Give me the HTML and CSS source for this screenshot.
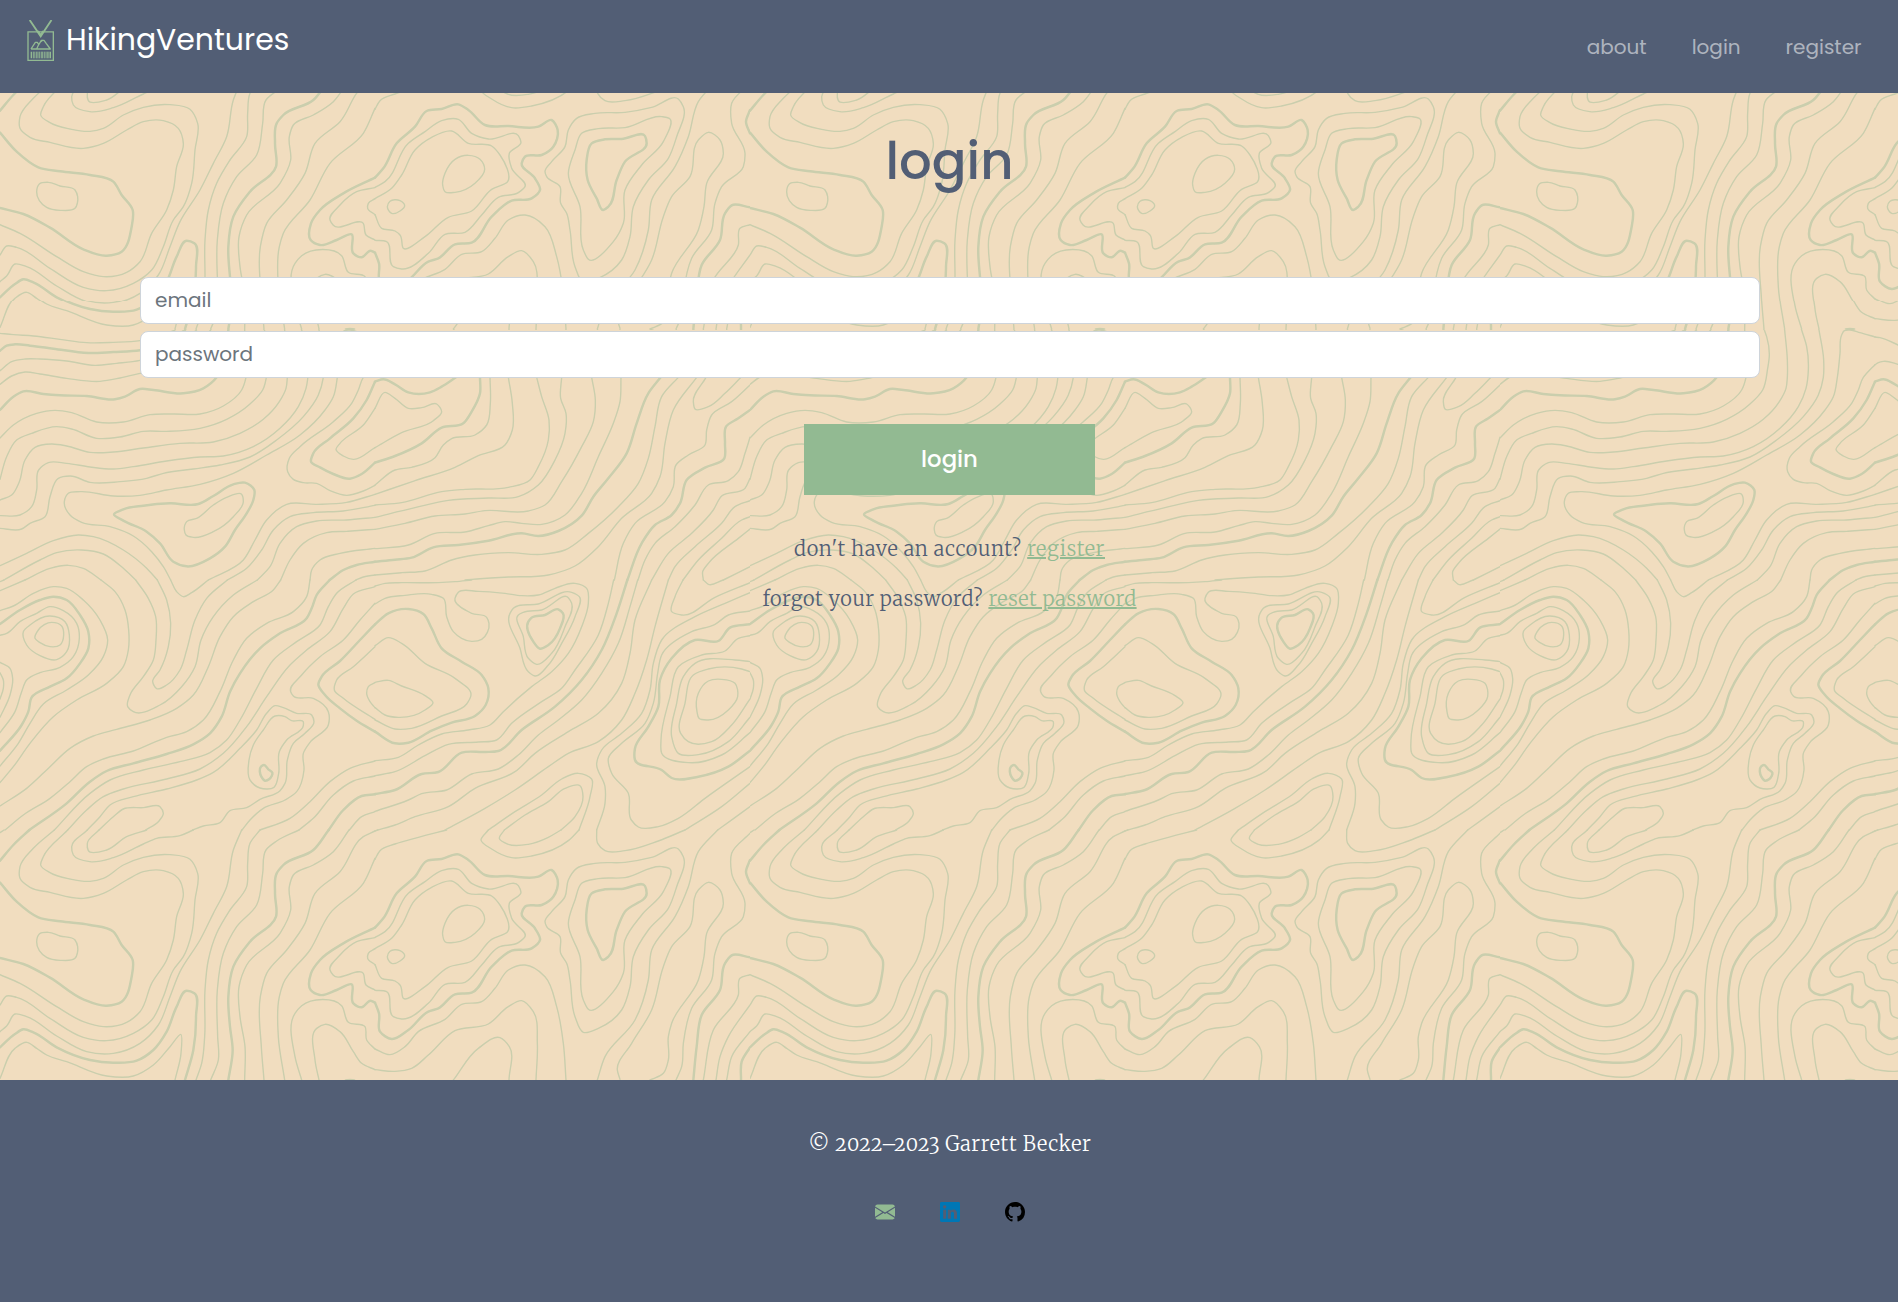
FILE: index.html
```html
<!DOCTYPE html>
<html lang="en">
<head>
<meta charset="utf-8">
<title>HikingVentures | login</title>
<link rel="stylesheet" href="styles.css">
</head>
<body>
<header class="navbar">
  <a class="brand" href="#">
    <svg class="brand-logo" viewBox="0 0 81 123" fill="none" stroke="#92ba92">
      <path stroke-width="5.500" d="M8 0 41 49 73.500 0"/>
      <path stroke-width="6" d="M33 33 41 46 49 33"/>
      <path stroke-width="4" d="M3 35.500H79V121H3Z"/>
      <path stroke-width="4" stroke-linejoin="round" d="M12 87H70L58 71 51 61H43L33 78 29 87M12 87 25 67H31L35 73M40 66 48 60"/>
      <path stroke-width="4" d="M13 95V115M70 95V115"/>
      <path stroke-width="2.800" d="M19 95V115M23.500 95V115M29 95V115M33 95V115M38 95V115M43 95V115M47 95V115M52 95V115M57 95V115M61 95V115M65.500 95V115"/>
    </svg>
    <span class="brand-name">HikingVentures</span>
  </a>
  <nav class="nav-links">
    <a href="#">about</a>
    <a href="#">login</a>
    <a href="#">register</a>
  </nav>
</header>

<main class="page">
  <svg class="topo" aria-hidden="true">
    <defs>
      <pattern id="contours" width="2250" height="2250" patternUnits="userSpaceOnUse" patternTransform="translate(0 237) scale(.333333)"></pattern>
    </defs>
    <rect width="100%" height="100%" fill="url(#contours)"/>
  </svg>
  <h1 class="title">login</h1>
  <form class="login-form">
    <input class="field" type="email" placeholder="email">
    <input class="field" type="password" placeholder="password">
    <button class="submit" type="button">login</button>
  </form>
  <p class="hint hint-register">don't have an account? <a href="#">register</a></p>
  <p class="hint hint-reset">forgot your password? <a href="#">reset password</a></p>
</main>

<footer class="footer">
  <p class="copyright">© 2022–2023 Garrett Becker</p>
  <div class="social">
    <a href="#"><svg viewBox="0 0 16 16" fill="#92ba92"><path d="M.05 3.555A2 2 0 0 1 2 2h12a2 2 0 0 1 1.950 1.555L8 8.414zM0 4.697v7.104l5.803-3.558zM6.761 8.830l-6.570 4.027A2 2 0 0 0 2 14h12a2 2 0 0 0 1.808-1.144l-6.570-4.027L8 9.586zm3.436-.586L16 11.801V4.697z"/></svg></a>
    <a href="#"><svg viewBox="0 0 16 16" fill="#0077b5"><path d="M0 1.146C0 .513.526 0 1.175 0h13.650C15.474 0 16 .513 16 1.146v13.708c0 .633-.526 1.146-1.175 1.146H1.175C.526 16 0 15.487 0 14.854zm4.943 12.248V6.169H2.542v7.225zm-1.200-8.212c.837 0 1.358-.554 1.358-1.248-.015-.709-.520-1.248-1.342-1.248S2.400 3.226 2.400 3.934c0 .694.521 1.248 1.327 1.248zm4.908 8.212V9.359c0-.216.016-.432.080-.586.173-.431.568-.878 1.232-.878.869 0 1.216.662 1.216 1.634v3.865h2.401V9.250c0-2.220-1.184-3.252-2.764-3.252-1.274 0-1.845.7-2.165 1.193v.025h-.016l.016-.025V6.169h-2.400c.03.678 0 7.225 0 7.225z"/></svg></a>
    <a href="#"><svg viewBox="0 0 16 16" fill="#000"><path d="M8 0C3.580 0 0 3.580 0 8c0 3.540 2.290 6.530 5.470 7.590.4.070.550-.170.550-.380 0-.190-.010-.820-.010-1.490-2.010.370-2.530-.490-2.690-.940-.090-.230-.480-.940-.820-1.130-.280-.150-.680-.520-.010-.530.630-.010 1.080.580 1.230.820.720 1.210 1.870.870 2.330.660.070-.520.280-.870.510-1.070-1.780-.200-3.640-.890-3.640-3.950 0-.870.310-1.590.820-2.150-.080-.200-.360-1.020.080-2.120 0 0 .670-.210 2.200.820.640-.180 1.320-.270 2-.270s1.360.090 2 .270c1.530-1.040 2.200-.820 2.200-.820.440 1.100.160 1.920.080 2.120.510.560.820 1.270.820 2.150 0 3.070-1.870 3.750-3.650 3.950.290.250.540.730.540 1.480 0 1.070-.010 1.930-.010 2.200 0 .210.150.460.550.380A8.010 8.010 0 0 0 16 8c0-4.420-3.580-8-8-8"/></svg></a>
  </div>
</footer>
<script src="topo.js"></script>
</body>
</html>
```
FILE: styles.css
```css
* { box-sizing: border-box; }
body {
  margin: 0;
  min-height: 1302px;
  display: flex;
  flex-direction: column;
  background: #f1ddbf;
  color: #525e75;
  font-family: Poppins, Inter, "Liberation Sans", sans-serif;
}
.navbar {
  height: 93px;
  flex: none;
  display: flex;
  justify-content: space-between;
  background: #525e75;
  padding: 20px 36.5px 0 27px;
}
.brand { display: flex; align-items: flex-start; color: #fff; text-decoration: none; }
.brand-logo { width: 27px; height: 41px; }
.brand-name { margin-left: 12px; font-size: 29.9px; line-height: 40px; }
.nav-links { display: flex; gap: 45px; padding-top: 12px; }
.nav-links a {
  color: rgba(255, 255, 255, .55);
  text-decoration: none;
  font-size: 20px;
  line-height: 30px;
}
.page {
  position: relative;
  height: 987px;
  flex: none;
  display: flex;
  flex-direction: column;
  align-items: center;
}
.topo { position: absolute; inset: 0; width: 100%; height: 100%; }
.page > :not(.topo) { position: relative; }
.contour { fill: none; stroke: #cacead; stroke-width: 4.2; stroke-linecap: round; stroke-linejoin: round; }
.contour.index { stroke-width: 7.4; }
.title { margin: 36px 0 0 1px; font-size: 51.3px; font-weight: 500; line-height: 64px; }
.login-form { width: 1620px; margin: 84px 0 0 2px; display: flex; flex-direction: column; align-items: center; gap: 7px; }
.field {
  width: 100%;
  height: 46.75px;
  border: 1px solid #ced4da;
  border-radius: 8px;
  padding: 0 14px;
  background: #fff;
  font: 20px Poppins, Inter, "Liberation Sans", sans-serif;
}
.field::placeholder { color: #6c757d; opacity: 1; }
.submit {
  width: 291px;
  height: 71px;
  margin: 39.5px 1px 0 0;
  padding: 0 0 1px;
  border: 0;
  background: #92ba92;
  color: #fff;
  font: 500 22.8px Poppins, Inter, "Liberation Sans", sans-serif;
}
.hint {
  margin: 0 0 0 1px;
  font: 300 20px/30px Merriweather, "DejaVu Serif Condensed", "DejaVu Serif", serif;
  white-space: nowrap;
}
.hint a { color: #92ba92; }
.hint-register { margin-top: 39px; letter-spacing: 0.65px; }
.hint-reset { margin-top: 20px; letter-spacing: 0.55px; }
.footer {
  height: 222px;
  flex: none;
  background: #525e75;
  display: flex;
  flex-direction: column;
  align-items: center;
  padding-left: 2px;
}
.copyright {
  margin: 49px 0 0;
  color: #fff;
  font: 300 20px/30px Merriweather, "DejaVu Serif Condensed", "DejaVu Serif", serif;
  font-variant-numeric: oldstyle-nums;
  letter-spacing: 0.65px;
}
.social { display: flex; gap: 45px; margin-top: 43px; }
.social svg { display: block; width: 20px; height: 20px; }
```
FILE: topo.js
```js
// Contour lines of the repeating map tile, split in six sheets.
// "i" marks an index (heavy) contour, "o" a closed one.
const sheets = [
  { x: 0, y: 0, lines: `
0,10 40,14 100,18 180,28 260,38 340,37 420,32 475,20 525,0
i 0,62 20,47 45,43 90,47 160,56 265,69 340,66 420,61 470,50 520,25 555,0
0,122 35,95 75,87 120,87 200,93 285,106 350,100 420,91 510,60 590,0
0,163 35,138 75,126 120,132 200,145 300,154 360,144 420,130 540,100 632,0
i 0,240 40,200 70,184 130,192 180,196 260,198 345,208 375,200 420,177 460,180 550,190 610,175 650,142 672,90 685,0
0,324 40,285 110,250 165,241 215,248 290,276 370,276 450,254 520,252 600,252 670,228 725,180 738,142 738,70 734,0
0,448 20,380 50,330 95,310 170,290 215,297 290,325 360,321 430,304 500,304 600,295 680,268 750,222 788,180 803,115 808,75 800,20 793,0
0,510 35,495 58,455 75,390 105,352 155,342 200,348 270,367 340,366 430,354 540,340 640,336 720,310 790,268 838,215 858,175 862,142 862,90 854,0
0,557 60,555 95,530 110,480 116,420 145,398 200,400 270,411 340,417 400,410 500,393 600,381 670,378 760,350 840,295 895,230 918,175 925,120 920,50 905,0
0,595 65,597 90,580 135,560 150,500 175,445 210,438 270,457 360,455 440,445 490,430 580,417 660,405 750,381 830,330 910,260 955,195 970,142 971,90 957,0
1125,21 1080,8 1050,0 1033,2 1025,15 1020,70 1012,142 1000,200 975,240 900,315 800,375 700,430 600,463 500,480 420,496 340,498 240,485 205,490 193,515 210,555 245,577 330,590 400,618 455,665 490,710 512,750
1125,104 1100,130 1090,142 1075,180 1055,220 1000,275 900,350 868,385 863,425 880,448 910,458 950,460 990,482 1040,496 1090,483 1125,466
i 1125,155 1100,210 1060,265 990,325 940,370 933,395 960,412 1000,432 1050,446 1085,432 1125,398
1125,235 1090,285 1020,340 1008,358 1030,378 1060,388 1125,353
io 342,553 370,538 430,527 510,520 595,522 640,498 700,463 735,458 763,480 760,510 740,550 705,600 675,650 630,685 560,709 520,695 480,640 440,605 370,572
o 553,600 560,575 590,565 640,525 680,502 725,493 730,515 700,560 640,605 580,622 558,615
625,750 730,690 765,630 800,570 860,523 950,523 1040,517 1125,493
682,750 740,715 785,660 820,600 870,560 940,548 1030,543 1125,526
772,750 810,710 840,640 890,590 950,573 1040,570 1125,562
842,750 870,690 910,640 980,608 1040,604 1125,598
930,750 935,720 960,690 1020,670 1125,655
i 989,750 1030,720 1070,705 1125,695
1068,750 1090,741 1125,735
0,707 80,670 160,632 235,615 280,620 370,660 440,715 472,750
12,750 120,690 170,668 245,660 310,672 370,715 407,750
75,750 150,715 205,706 250,715 303,750` },
  { x: 1125, y: 0, lines: `
0,21 15,23 69,45 130,75
0,104 10,98 25,94 69,103 130,125
i 0,155 25,148 60,163 100,187 165,187 200,170 243,142
i 315,142 315,190 290,245 265,280 200,293 140,340 60,378 0,398
0,235 30,187 60,205 100,235 140,233 185,222 200,245 175,272 80,308 0,353
345,142 346,220 335,285 300,315 230,326 205,345 180,383 110,412 60,420 0,465
400,142 412,220 412,300 390,345 310,377 240,412 120,452 0,493
485,142 500,200 522,270 520,330 490,410 465,450 400,472 270,478 200,485 80,518 0,525
560,142 557,205 573,250 570,310 540,390 490,465 430,500 340,504 220,511 120,533 0,562
650,142 661,210 655,275 620,350 560,455 510,525 460,543 330,542 270,552 180,558 90,580 0,598
738,142 735,215 715,280 670,380 620,490 570,555 500,583 440,580 390,575 340,587 270,606 180,610 100,645 0,656
i 857,142 820,190 785,280 755,370 700,445 655,500 620,557 550,603 490,618 440,610 340,632 250,645 175,652 110,683 60,689 0,695
910,142 860,200 840,290 820,385 790,460 730,530 640,610 570,660 500,673 400,668 300,675 230,690 150,723 80,728 0,735
965,142 895,240 870,340 855,440 830,490 740,565 670,650 600,708 520,735 400,741 290,748 270,750
993,142 955,215 960,237 1000,230 1050,190 1098,142
1125,165 1070,215 1010,255 995,300 990,345 940,375 903,405 895,470 870,515 780,580 745,640 718,750
i 1125,240 1090,265 1053,290 1050,340 1048,385 990,413 935,450 915,520 890,555 840,585 800,640 757,750
1125,322 1110,370 1090,425 1060,452 1000,465 960,525 900,590 840,640 810,690 789,750
1125,445 1110,475 1040,498 1015,540 950,610 880,670 830,750
1125,512 1080,530 1040,580 960,650 900,710 880,750
1125,560 1100,570 1040,625 970,690 924,750
1125,597 1090,625 1000,700 983,725 985,750
1125,710 1045,750` },
  { x: 0, y: 750, lines: `
0,32 75,0
0,5 12,0
303,0 345,35 375,90 386,150 385,210 370,260 320,310 230,360 160,410 90,490 40,560 0,608
0,92 40,78 100,40 160,20 200,25 250,60 300,120 323,180 310,230 265,285 200,330 130,372 90,430 55,490 0,558
i 0,132 60,90 120,60 160,50 200,60 240,105 265,155 265,205 240,250 200,295 150,320 95,352 85,395 65,435 0,512
0,166 20,160 60,125 110,100 150,80 190,92 230,130 238,175 220,230 180,262 120,278 80,300 65,335 45,395 0,458
o 70,155 90,135 150,108 195,125 208,165 200,215 170,239 120,227 80,195
o 105,175 115,150 155,127 185,138 191,165 180,195 150,200 120,188
0,247 30,265 38,295 30,345 0,412
0,278 10,300 10,325 0,357
407,0 445,55 467,110 468,180 460,240 430,290 390,345 383,380 400,395 480,375 545,320 585,260 603,180 640,110 700,45 772,0
472,0 500,60 512,130 505,200 480,270 458,305 470,326 500,315 540,270 560,210 585,120 620,55 682,0
842,0 820,30 760,65 700,110 660,170 625,260 580,345 530,385 450,420 350,448 280,468 210,505 150,560 80,625 0,678
512,0 530,35 550,50 575,38 625,0
930,0 920,50 880,95 800,130 740,175 700,240 660,335 610,420 560,455 500,472 400,513 310,537 260,560 210,605 150,655 70,705 15,750
i 989,0 950,45 935,85 920,115 840,160 780,205 720,280 690,335 665,410 630,460 580,493 500,522 400,550 320,573 270,605 200,670 88,750
1068,0 1010,40 985,80 960,135 890,185 820,240 770,325 720,420 680,480 630,518 540,545 430,570 330,600 270,640 163,750
1125,20 1060,42 1030,85 990,155 920,210 870,255 800,350 740,440 670,520 600,567 500,597 370,627 310,650 260,690 203,750
1125,70 1080,120 1030,180 960,230 905,285 872,335 880,348 940,355 985,395 985,435 930,487 910,520 912,570 890,635 855,660 790,685 750,720 726,750
i 1125,133 1080,180 1020,243 965,290 955,313 975,345 1020,385 1070,422 1125,455
1125,200 1060,260 1010,300 1003,330 1030,355 1125,418
1125,308 1105,320 1100,340 1110,365 1125,383
262,750 300,710 330,675 400,650 500,627 590,600 640,577 720,505 770,450 800,400 825,377 850,383 890,400 935,405 942,425 915,460 880,490 862,540 855,610 840,632 780,658 740,683 690,692 660,728 610,738 578,750
o 825,408 855,410 875,422 910,425 910,437 860,480 838,515 836,580 822,622 780,624 750,600 747,540 760,495 790,450
io 783,560 792,555 805,568 817,578 808,597 795,602 784,590
297,750 340,710 370,687 430,683 480,680 490,700 475,725 437,750
1125,543 1050,565 990,605 930,665 870,715 780,750
1125,588 1060,603 1000,645 940,715 897,750
i 1125,643 1085,648 1030,690 986,750
1125,695 1085,710 1048,750` },
  { x: 1125, y: 750, lines: `
0,18 30,10 80,8 190,8 240,5 290,0
0,72 30,55 90,46 170,43 205,55 215,110 235,155 290,184 320,178 342,130 335,112 290,100 240,55 250,37 310,34 390,40 440,47 490,45 540,25 600,10 635,25 640,70 620,140 580,220 530,275 470,320 385,395 345,435 280,450 200,462 130,495 70,532 0,542
i 0,133 40,100 100,87 145,102 170,145 200,205 260,245 320,285 340,325 332,375 300,408 230,428 170,452 100,488 60,490 0,455
0,197 40,173 80,190 150,250 240,295 288,345 275,372 200,408 110,445 60,447 0,420
0,307 40,301 80,318 150,347 174,368 150,390 70,412 30,405 0,383
o 405,100 415,85 490,72 590,37 613,50 600,110 560,190 520,255 480,288 460,275 435,205
o 430,105 445,97 500,90 580,53 590,70 570,140 530,220 485,253 460,235 445,170
io 460,125 470,113 510,105 550,88 564,100 555,145 520,195 495,206 475,185
716,0 700,70 670,165 600,270 560,325 500,365 410,430 365,480 310,486 220,493 150,527 60,575 0,587
i 757,0 725,100 680,210 620,300 540,380 440,450 370,513 330,516 260,518 190,576 140,582 60,630 0,642
788,0 765,80 730,190 680,280 620,360 550,420 490,465 430,525 370,567 290,582 215,630 140,641 100,660 0,694
830,0 780,120 765,220 740,310 670,400 580,455 480,520 420,575 300,625 220,680 120,710 60,735 8,750
880,0 840,140 815,240 780,340 740,420 670,485 580,520 520,560 420,630 330,685 210,750
1125,8 1020,52 920,105 890,95 900,50 924,0
985,0 1000,13 1045,0
1125,38 1050,70 960,110 860,180 835,250 825,330 800,400 740,460 680,510 665,550 690,620 690,670 665,750
1125,93 1060,105 1020,133 950,155 860,225 848,280 835,370 810,430 740,490 700,535 710,580 760,640 769,720 790,741 850,740 910,715 990,655 1125,560
i 1125,133 1065,143 1030,183 960,180 890,235 855,300 850,380 820,440 780,505 780,540 860,570 890,594 970,590 1060,560 1125,512
1125,167 1090,175 1050,213 980,225 910,260 885,350 858,480 860,520 940,548 1040,525 1125,458
1125,245 1080,240 960,250 925,290 905,370 890,470 910,520 970,524 1060,485 1125,412
1125,275 1100,267 1000,267 955,285 930,370 917,460 940,485 1010,485 1070,435 1125,357
o 966,395 970,340 1000,303 1040,298 1080,310 1088,350 1060,390 1000,420 972,415
1125,610 1040,680 930,750
1125,680 1028,750
340,750 420,695 500,645 560,597 610,580 650,597 645,650 612,750
388,750 450,705 520,665 570,625 615,617 624,650 600,710 558,750` },
  { x: 0, y: 1500, lines: `
0,8 12,0
i 0,92 40,45 88,0
163,0 100,55 60,110 60,145 90,172 150,187 250,205 310,190 380,150 430,125 490,122 535,145 550,190 530,260 520,330 500,390 455,460 420,545 380,577 310,590 250,575 170,530 60,460 0,434
203,0 130,80 122,105 150,128 210,147 270,154 310,145 370,105 430,82 510,74 570,88 593,130 585,210 575,310 550,380 520,420 490,500 455,570 400,610 320,632 250,622 150,565 50,502 20,498 0,525
262,0 215,50 220,75 270,95 340,83 430,42 470,25 540,17 580,0
297,0 262,40 265,62 320,60 380,20 440,0
725,0 700,60 680,170 640,250 600,330 540,425 510,500 475,585 420,640 340,670 260,665 170,618 80,560 45,552 20,588 0,605
i 0,158 50,215 115,262 180,274 270,285 340,305 365,345 398,390 395,440 365,515 320,527 250,508 150,443 70,402 0,384
o 110,335 118,312 145,307 180,318 225,330 233,350 225,385 180,391 140,382 118,362
i 0,652 45,612 70,598 100,607 170,652 270,690 340,698 410,692 460,660 500,605 530,530 560,482 583,490 588,560 580,660 555,750
0,745 45,655 80,637 110,655 140,675 200,695 320,738 400,738 460,705 510,650 542,613 543,670 525,750
780,0 750,40 743,100 740,170 690,240 650,310 625,390 615,480 614,620 605,700 588,750
897,0 830,33 798,60 788,130 770,225 710,290 670,370 652,480 653,620 655,690 632,750
i 986,0 940,60 850,105 830,130 825,190 828,260 750,335 700,410 685,500 690,590 698,660 685,750
1047,0 1000,65 940,105 880,135 868,170 872,240 840,310 740,405 717,470 720,560 735,650 734,750
1125,3 1090,20 1020,125 945,190 915,280 860,360 800,430 781,500 784,650 792,750
1125,85 1090,160 990,250 930,360 850,460 838,500 835,620 854,750
905,750 885,680 885,550 905,527 1025,527 1045,577 1095,590 1100,630 1125,657
957,750 945,690 950,595 975,583 1020,605 1060,665 1085,700 1125,719
1036,750 1050,748 1064,750
i 1125,293 1030,340 960,390 933,430 932,480 960,495 1010,480 1055,463 1060,520 1085,532 1112,512 1125,518
1125,323 1070,335 1020,375 990,420 1000,436 1090,430 1098,465 1125,480
1125,356 1105,370 1103,385 1125,404` },
  { x: 1125, y: 1500, lines: `
0,88 15,62 60,42 130,22 215,0
0,3 8,0
i 0,293 25,265 65,190 120,140 155,93 200,87 250,73 280,90 330,135 400,138 490,140 530,120 548,150 535,200 500,225 450,230 440,250 480,295 495,330 470,355 410,362 350,410 290,488 240,493 190,535 160,545 100,600 50,627 15,605 12,550 0,518
0,322 30,305 100,190 150,155 200,122 250,118 290,160 340,177 430,167 438,187 403,220 410,265 450,320 430,338 370,352 320,405 270,457 210,463 160,520 80,567 55,560 35,485 0,481
0,356 50,325 80,285 120,210 170,172 230,153 280,190 350,198 375,225 398,305 350,328 290,393 220,412 150,470 85,505 75,465 60,453 20,445 0,404
o 203,315 210,280 240,238 280,226 315,238 329,268 300,310 240,337 210,335
o 37,380 45,364 75,362 89,377 75,393 50,400
340,0 318,30 350,57 410,83 470,78 580,32 612,0
388,0 373,25 400,43 460,43 520,22 558,0
665,0 668,40 690,62 750,62 850,33 930,0
0,657 45,674 90,650 130,605 210,568 260,523 320,515 360,475 400,420 450,405 510,440 545,530 565,640 573,750
0,719 60,724 110,715 160,675 240,602 340,582 400,530 440,512 475,545 487,640 483,750
235,750 310,655 375,623 403,650 402,750
o 510,275 530,245 570,200 580,150 605,115 660,100 750,97 830,82 910,57 925,80 905,170 880,235 820,300 775,380 765,470 740,540 670,595 625,607 600,560 585,450 575,400 557,370 555,320 515,290
o 580,280 600,210 620,160 670,146 750,143 860,110 883,115 865,185 800,255 750,330 745,430 715,485 640,538 625,510 615,380
io 635,240 650,190 690,178 740,177 810,168 815,190 750,245 725,300 700,380 685,390 665,355 638,300
1028,0 970,65 940,170 900,260 830,360 820,450 780,570 690,680 667,750
735,748 727,720 770,640 830,540 865,410 890,350 945,290 970,180 1000,157 1035,180 1045,220 995,310 987,380 970,450 890,580 880,620 880,690 865,730 825,750
1125,10 1070,70 1070,130 1110,220 1105,260 1040,320 1020,370 1010,450 950,535 925,640 920,710 903,750
i 1125,90 1113,125 1125,160
i 1125,382 1070,376 1050,400 1035,480 980,555 965,650 955,750
1125,434 1095,445 1090,495 1015,600 985,750
1125,525 1060,620 1035,680 1023,750
1125,605 1070,680 1055,750
i 1125,652 1100,695 1098,750` }
];

const dist = (a, b) => Math.hypot(a[0] - b[0], a[1] - b[1]);

// Smooth curve through the points, tangents weighted by segment length.
function smoothPath(pts, closed) {
  const n = pts.length;
  const at = i => closed ? pts[(i + n) % n] : pts[Math.max(0, Math.min(n - 1, i))];
  const tangent = i => {
    const a = at(i - 1), b = at(i), c = at(i + 1);
    const d1 = dist(a, b), d2 = dist(b, c);
    if (!d1 || !d2) return [(c[0] - a[0]) / (d1 + d2), (c[1] - a[1]) / (d1 + d2)];
    const v = [0, 1].map(k =>
      ((b[k] - a[k]) / d1 * d2 + (c[k] - b[k]) / d2 * d1) / (d1 + d2));
    return v;
  };
  let d = `M${pts[0]}`;
  for (let i = 0; i < (closed ? n : n - 1); i++) {
    const p = at(i), q = at(i + 1), l = dist(p, q) / 3;
    const s = tangent(i), t = tangent(i + 1);
    d += `C${p[0] + s[0] * l} ${p[1] + s[1] * l} ${q[0] - t[0] * l} ${q[1] - t[1] * l} ${q}`;
  }
  return closed ? d + "Z" : d;
}

const pattern = document.getElementById("contours");
for (const sheet of sheets) {
  for (const line of sheet.lines.trim().split("\n")) {
    const flag = (line.match(/^[io]+/) || [""])[0];
    const pts = line.slice(flag.length).trim().split(" ").map(p => {
      const [x, y] = p.split(",").map(Number);
      return [x + sheet.x, y + sheet.y];
    });
    const path = document.createElementNS("http://www.w3.org/2000/svg", "path");
    path.setAttribute("class", flag.includes("i") ? "contour index" : "contour");
    path.setAttribute("d", smoothPath(pts, flag.includes("o")));
    pattern.appendChild(path);
  }
}
```
